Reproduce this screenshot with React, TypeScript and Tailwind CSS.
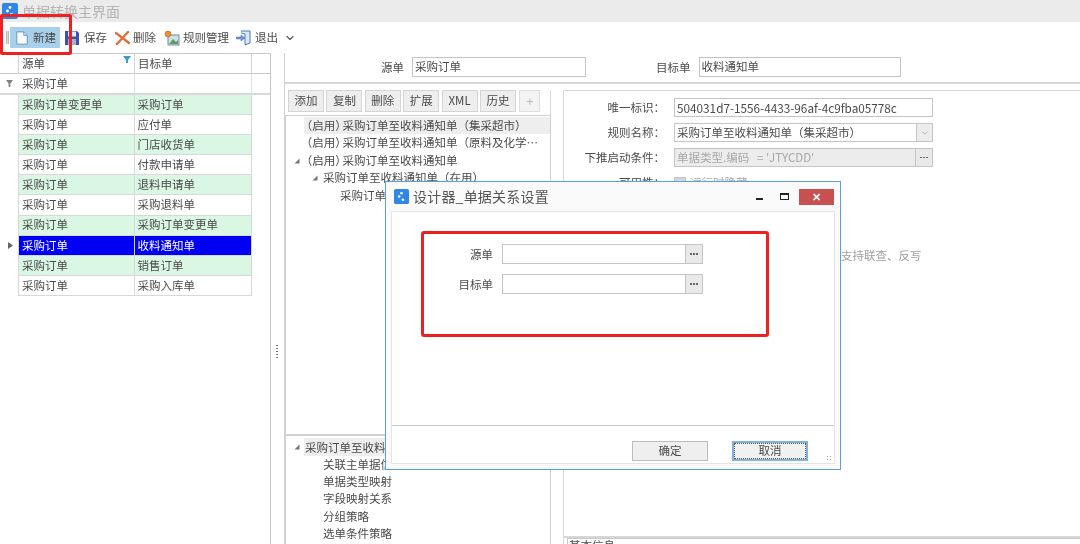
import { ChevronDown } from "lucide-react";

const rows = [
  ["采购订单变更单", "采购订单", "green"],
  ["采购订单", "应付单", "white"],
  ["采购订单", "门店收货单", "green"],
  ["采购订单", "付款申请单", "white"],
  ["采购订单", "退料申请单", "green"],
  ["采购订单", "采购退料单", "white"],
  ["采购订单", "采购订单变更单", "green"],
  ["采购订单", "收料通知单", "active"],
  ["采购订单", "销售订单", "green"],
  ["采购订单", "采购入库单", "white"],
];

const tabs = ["添加", "复制", "删除", "扩展", "XML", "历史"];

const ruleTree = [
  { text: "采购订单至收料通知单（集采超市）", pad: "pl-[19px]", enabled: true, selected: true },
  { text: "采购订单至收料通知单（原料及化学…", pad: "pl-[19px]", enabled: true },
  { text: "采购订单至收料通知单", pad: "pl-[19px]", enabled: true, arrow: "left-[8px]" },
  { text: "采购订单至收料通知单（在用）", pad: "pl-[37px]", arrow: "left-[26px]" },
  { text: "采购订单至收料通知单", pad: "pl-[54px]" },
];

const detailTree = ["关联主单据信息", "单据类型映射", "字段映射关系", "分组策略", "选单条件策略"];

const AppLogo = ({ className }: { className: string }) => (
  <svg viewBox="0 0 16 16" className={className}>
    <rect width="16" height="16" rx="2" fill="#2f86e6" />
    <circle cx="8" cy="4.5" r="1.4" fill="#fff" />
    <circle cx="5.5" cy="8" r="1.4" fill="#fff" />
    <circle cx="9.5" cy="11.5" r="1.4" fill="#fff" />
  </svg>
);

const TreeArrow = ({ className }: { className: string }) => (
  <svg viewBox="0 0 6 6" className={`absolute top-[6px] h-[6px] w-[6px] ${className}`}>
    <path d="M5.5 0.5V5.5H0.5Z" fill="#777" />
  </svg>
);

const DotsButton = () => (
  <div className="flex h-full w-[17px] shrink-0 items-center justify-center gap-[1.5px] border-l border-[#c4c4c4] bg-[#e9e9e9]">
    <span className="h-[1.5px] w-[1.5px] bg-[#666]" />
    <span className="h-[1.5px] w-[1.5px] bg-[#666]" />
    <span className="h-[1.5px] w-[1.5px] bg-[#666]" />
  </div>
);

const ToolbarItem = ({ icon, label, className }: { icon: React.ReactNode; label: string; className: string }) => (
  <div className={`flex items-center ${className}`}>
    {icon}
    <span>{label}</span>
  </div>
);

export default function App() {
  return (
    <div className="relative flex h-[544px] w-[1080px] flex-col overflow-hidden bg-white font-['Noto_Sans_CJK_SC','Liberation_Sans',sans-serif] text-[11.5px] text-[#4a4a4a] blur-[0.3px]">
      {/* title bar */}
      <div className="flex h-[22px] shrink-0 items-center bg-[#ebebeb] pl-[2px]">
        <AppLogo className="h-[16px] w-[16px]" />
        <span className="ml-[4px] text-[14px] text-[#b4b4b4]">单据转换主界面</span>
      </div>

      {/* toolbar */}
      <div className="flex h-[31px] shrink-0 items-center pl-[6px] text-[11.5px]">
        <div className="h-[13px] w-[3px] border-x border-[#b8b8b8] bg-[#dcdcdc]" />
        <ToolbarItem
          className="ml-[1px] h-[21px] w-[50px] gap-[4px] bg-[#a9d0ea] pl-[5px]"
          label="新建"
          icon={
            <svg viewBox="0 0 16 16" className="h-[16px] w-[14px]">
              <path d="M2 1H10L14 5V15H2Z" fill="#f7fbff" stroke="#5b8fc4" />
              <path d="M10 1V5H14" fill="#d7e6f5" stroke="#5b8fc4" />
            </svg>
          }
        />
        <ToolbarItem
          className="ml-[5px] gap-[5px]"
          label="保存"
          icon={
            <svg viewBox="0 0 14 14" className="h-[14px] w-[14px]">
              <path d="M0 0H12L14 2V14H0Z" fill="#3a55a8" />
              <rect x="3" y="0.5" width="8" height="5" fill="#e8eef8" />
              <rect x="3" y="8" width="8" height="6" fill="#9fb2da" />
            </svg>
          }
        />
        <ToolbarItem
          className="ml-[8px] gap-[3px]"
          label="删除"
          icon={
            <svg viewBox="0 0 15 14" className="h-[14px] w-[15px]">
              <path d="M1 2L14 12M13 1L2 13" stroke="#e0703a" strokeWidth="2.4" strokeLinecap="round" />
            </svg>
          }
        />
        <ToolbarItem
          className="ml-[8px] gap-[3px]"
          label="规则管理"
          icon={
            <svg viewBox="0 0 16 16" className="h-[16px] w-[16px]">
              <rect x="4" y="5" width="11" height="10" fill="#cfe0e8" stroke="#6d8ea0" />
              <path d="M5 14L9 9L12 12L14 10V14Z" fill="#5f9a62" />
              <circle cx="4" cy="4" r="3" fill="#e8913a" stroke="#b5651d" strokeWidth="0.6" />
            </svg>
          }
        />
        <ToolbarItem
          className="ml-[7px] gap-[4px]"
          label="退出"
          icon={
            <svg viewBox="0 0 15 16" className="h-[16px] w-[15px]">
              <path d="M5 1H14V13L9 15V4L5 3" fill="#dce8f6" stroke="#4d78b8" />
              <path d="M0.5 7H5V5L9 8L5 11V9H0.5Z" fill="#6f9ad6" stroke="#3f68a8" strokeWidth="0.5" />
            </svg>
          }
        />
        <ChevronDown className="ml-[6px] h-[12px] w-[12px] text-[#555]" strokeWidth={2.2} />
      </div>

      {/* body */}
      <div className="flex min-h-0 flex-1">
        {/* left grid */}
        <div className="h-full w-[271px] shrink-0 border-r border-[#c8c8c8]">
          <div className="grid h-[21px] grid-cols-[19px_116px_117px_18px] border-y border-[#c8c8c8]">
            <div className="border-r border-[#d4d4d4]" />
            <div className="relative flex items-center border-r border-[#d4d4d4] pl-[3px]">
              源单
              <svg viewBox="0 0 8 7" className="absolute top-[2px] right-[3px] h-[7px] w-[8px]">
                <path d="M0 0H8L5 4V7H3V4Z" fill="#3c9ad6" />
              </svg>
            </div>
            <div className="flex items-center border-r border-[#d4d4d4] pl-[3px]">目标单</div>
            <div />
          </div>
          <div className="grid h-[21px] grid-cols-[19px_116px_117px] border-b-2 border-[#d8d8d8]">
            <div className="flex items-center justify-center">
              <svg viewBox="0 0 8 8" className="h-[7px] w-[7px]">
                <path d="M0 0H8L5 4V8H3V4Z" fill="#808080" />
              </svg>
            </div>
            <div className="flex items-center border-r border-[#e0e0e0] pl-[3px]">采购订单</div>
            <div className="border-r border-[#e0e0e0]" />
          </div>
          <div className="ml-[18px] w-[234px] border-l border-[#d8d8d8]">
            {rows.map(([source, target, tone], i) => (
              <div
                key={i}
                className={`relative grid h-[20.1px] grid-cols-[115.5px_1fr] border-r border-b border-[#d8d8d8] ${
                  tone === "green" ? "bg-[#d9f7e3]" : tone === "active" ? "bg-[#0000f5] text-white" : "bg-white"
                }`}
              >
                {tone === "active" && (
                  <svg viewBox="0 0 5 7" className="absolute top-[6px] left-[-11px] h-[7px] w-[5px]">
                    <path d="M0 0L5 3.5L0 7Z" fill="#666" />
                  </svg>
                )}
                <div className="flex items-center border-r border-[#d8d8d8] pl-[3px]">{source}</div>
                <div className="flex items-center pl-[3px]">{target}</div>
              </div>
            ))}
          </div>
        </div>

        {/* splitter */}
        <div className="flex h-full w-[14px] shrink-0 flex-col items-center border-r border-[#d0d0d0] pt-[292px] pr-[2px]">
          <div className="h-[14px] w-[2px] bg-[repeating-linear-gradient(to_bottom,#777_0,#777_1px,transparent_1px,transparent_3px)]" />
        </div>

        {/* rule side */}
        <div className="flex h-full min-w-0 flex-1 flex-col">
          <div className="flex h-[31px] shrink-0 items-start border-b-2 border-[#d6d6d6] pt-[4px]">
            <span className="ml-[96px] leading-[20px]">源单</span>
            <div className="ml-[8px] flex h-[20px] w-[174px] items-center border border-[#c4c4c4] pl-[2px]">采购订单</div>
            <span className="ml-[70px] leading-[20px]">目标单</span>
            <div className="ml-[8px] flex h-[20px] w-[202px] items-center border border-[#c4c4c4] pl-[2px]">收料通知单</div>
          </div>

          <div className="flex min-h-0 flex-1 pt-[6px]">
            {/* rule list */}
            <div className="flex h-full w-[266px] shrink-0 flex-col">
              <div className="flex h-[25px] shrink-0 items-start gap-[2.4px] border-r border-[#d8d8d8] pl-[3px]">
                {tabs.map((label) => (
                  <div key={label} className="flex h-[22px] w-[36px] items-center justify-center border border-[#d4d4d4] bg-[#eeeeee]">
                    {label}
                  </div>
                ))}
                <div className="ml-[1px] flex h-[22px] w-[21px] items-center justify-center border border-[#dedede] bg-[#f3f3f3] text-[13px] text-[#bbb]">
                  +
                </div>
              </div>
              <div className="h-[321px] shrink-0 border border-b-2 border-[#d0d0d0] pt-[1px]">
                {ruleTree.map((node, i) => (
                  <div key={i} className={`relative h-[17.4px] leading-[17.4px] whitespace-nowrap ${node.pad}`}>
                    {node.selected && <div className="absolute inset-y-0 right-0 left-[18px] bg-[#eeeeee]" />}
                    {node.arrow && <TreeArrow className={node.arrow} />}
                    {node.enabled && <span className="relative px-[1.5px] [font-feature-settings:'halt']">（启用）</span>}
                    <span className="relative">{node.text}</span>
                  </div>
                ))}
              </div>
              <div className="min-h-0 flex-1 border-x border-[#d0d0d0] pt-[2px]">
                <div className="relative h-[18px] pl-[19px] leading-[18px]">
                  <div className="absolute inset-y-0 right-0 left-[18px] bg-[#eeeeee]" />
                  <TreeArrow className="left-[8px]" />
                  <span className="relative">采购订单至收料通知单</span>
                </div>
                {detailTree.map((node) => (
                  <div key={node} className="h-[17.2px] pl-[37px] leading-[17.2px]">
                    {node}
                  </div>
                ))}
              </div>
            </div>

            {/* rule detail */}
            <div className="ml-[12px] flex h-full min-w-0 flex-1 flex-col border-t border-l border-[#d8d8d8]">
              <div className="min-h-0 flex-1">
                <div className="mt-[7px] flex h-[19px] items-center">
                  <span className="w-[101px] text-right">唯一标识：</span>
                  <div className="ml-[9px] flex h-full w-[259px] items-center border border-[#c4c4c4] pl-[2px] text-[11.75px]">
                    504031d7-1556-4433-96af-4c9fba05778c
                  </div>
                </div>
                <div className="mt-[6px] flex h-[19px] items-center">
                  <span className="w-[101px] text-right">规则名称：</span>
                  <div className="ml-[9px] flex h-full w-[259px] items-center border border-[#c4c4c4] pl-[2px]">
                    <span className="flex-1">采购订单至收料通知单（集采超市）</span>
                    <div className="flex h-full w-[16px] items-center justify-center border-l border-[#c4c4c4] bg-[#ececec]">
                      <ChevronDown className="h-[10px] w-[10px] text-[#aaa]" />
                    </div>
                  </div>
                </div>
                <div className="mt-[6px] flex h-[19px] items-center">
                  <span className="w-[101px] text-right">下推启动条件：</span>
                  <div className="ml-[9px] flex h-full w-[259px] items-center border border-[#c4c4c4] bg-[#ececec] pl-[2px] text-[#a8a8a8]">
                    <span className="flex-1 whitespace-pre">单据类型.编码   = 'JTYCDD'</span>
                    <DotsButton />
                  </div>
                </div>
                <div className="mt-[6px] flex h-[19px] items-center">
                  <span className="w-[101px] text-right">可用性：</span>
                  <div className="ml-[9px] h-[12px] w-[12px] border border-[#c4c4c4] bg-[#d4d4d4]" />
                  <span className="ml-[4px] text-[#a8a8a8]">运行时隐藏</span>
                </div>
                <div className="mt-[55px] pl-[277px] text-[#a0a0a0]">支持联查、反写</div>
              </div>
              <div className="h-[8px] shrink-0 border-t-2 border-[#d6d6d6] pl-[3px]">
                <div className="border-t border-l border-[#c8c8c8] pl-[1px] leading-[12px]">基本信息</div>
              </div>
            </div>
          </div>
        </div>
      </div>

      {/* dialog */}
      <div className="absolute top-[181px] left-[385px] flex h-[289px] w-[456px] flex-col border border-[#5aa0dc] bg-[#fafafa] px-[5px] pb-[5px]">
        <div className="flex h-[29px] shrink-0 items-center">
          <AppLogo className="ml-[3px] h-[15px] w-[15px]" />
          <span className="ml-[4px] flex-1 text-[14px] tracking-[0.2px] text-[#555]">设计器_单据关系设置</span>
          <div className="mt-[4px] h-[2px] w-[7px] bg-[#222]" />
          <div className="ml-[17px] h-[7px] w-[9px] border border-t-2 border-[#222]" />
          <div className="mr-[1px] ml-[10px] flex h-[16px] w-[35px] items-center justify-center bg-[#c75050] text-[11px] font-bold text-white">
            ✕
          </div>
        </div>
        <div className="flex min-h-0 flex-1 flex-col border border-[#e4e4e4] bg-white">
          <div className="h-[214px] shrink-0 border-b-[1.5px] border-[#c8c8c8] pt-[32px]">
            <div className="flex h-[20px] items-center">
              <span className="w-[101px] pt-[2px] text-right">源单</span>
              <div className="ml-[9px] flex h-full w-[201px] items-center justify-end border border-[#c4c4c4]">
                <DotsButton />
              </div>
            </div>
            <div className="mt-[10px] flex h-[20px] items-center">
              <span className="w-[101px] pt-[2px] text-right">目标单</span>
              <div className="ml-[9px] flex h-full w-[201px] items-center justify-end border border-[#c4c4c4]">
                <DotsButton />
              </div>
            </div>
          </div>
          <div className="relative flex flex-1 items-end justify-end gap-[24px] pr-[26px] pb-[2px]">
            <div className="flex h-[20px] w-[76px] items-center justify-center border border-[#bdbdbd] bg-[#efefef]">确定</div>
            <div className="flex h-[20px] w-[76px] items-center justify-center border-2 border-[#7fb2e0] bg-[#f1f1f1] outline-1 -outline-offset-3 outline-[#555] outline-dotted">
              取消
            </div>
            <div className="absolute right-[1px] bottom-[1px] h-[7px] w-[7px] bg-[radial-gradient(#999_1px,transparent_1px)] bg-[length:3px_3px]" />
          </div>
        </div>
      </div>

      {/* red annotations */}
      <div className="absolute top-[14px] left-0 h-[41px] w-[72px] rounded-[2px] border-[3px] border-[#ef2020]" />
      <div className="absolute top-[231px] left-[421px] h-[106px] w-[348px] rounded-[3px] border-[3px] border-[#ef2020]" />
    </div>
  );
}
